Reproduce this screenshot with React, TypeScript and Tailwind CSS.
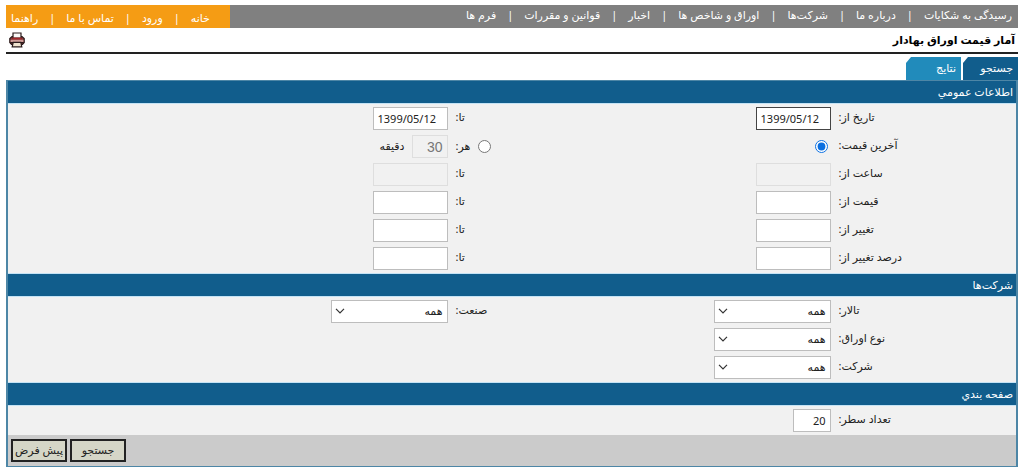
import { Fragment, useState } from "react";
import type { ReactNode } from "react";
import clsx from "clsx";

const MAIN_LINKS = [
  "رسیدگی به شکایات",
  "درباره ما",
  "شرکت‌ها",
  "اوراق و شاخص ها",
  "اخبار",
  "قوانین و مقررات",
  "فرم ها",
];

const USER_LINKS = ["خانه", "ورود", "تماس با ما", "راهنما"];

const RANGES = [
  { id: "price", label: "قیمت از:" },
  { id: "change", label: "تغییر از:" },
  { id: "percent", label: "درصد تغییر از:" },
];

const FIELD = "h-[23px] border px-1";
const ENABLED = "border-[#bdbdbd] bg-white text-[#222]";
const DISABLED = "border-[#dedede] bg-[#f1f1f1] text-[#777]";

function Links({ items }: { items: string[] }) {
  return (
    <>
      {items.map((item, i) => (
        <Fragment key={item}>
          {i > 0 && <span>|</span>}
          <a href="#">{item}</a>
        </Fragment>
      ))}
    </>
  );
}

function PrinterIcon() {
  return (
    <svg viewBox="0 0 16 16" className="h-4 w-4">
      <path d="M3 4.5 H13 L15.2 6.5 V10.5 L13.5 12.5 H2.5 L0.8 10.5 V6.5 Z" fill="#8a3a3c" stroke="#2a1c1c" strokeWidth="1.2" />
      <path d="M4 6.2 V1 H12 V6.2 Z" fill="#fbfaf8" stroke="#2a1c1c" strokeWidth="1.2" />
      <path d="M3.4 6.4 H12.6" stroke="#a3262a" strokeWidth="1.6" />
      <path d="M1.6 7.8 H14.4 V10 H1.6 Z" fill="#cf9c98" />
      <path d="M4.2 10.4 H11.8 L12.8 14.8 H3.2 Z" fill="#efe3cf" stroke="#2a1c1c" strokeWidth="1.2" />
      <path d="M1.4 10.6 H4 M12 10.6 H14.6" stroke="#2a1c1c" strokeWidth="1.4" />
    </svg>
  );
}

function Section({ title, children }: { title: string; children: ReactNode }) {
  return (
    <section className="border-b border-[#c4e3f5] last-of-type:border-b-0">
      <h2 className="h-[22px] bg-[#115d8c] px-[3px] leading-[22px] text-white">{title}</h2>
      <div className="flex flex-col gap-[5px] border-t border-[#c4e3f5] pt-[3px] pb-[3px]">{children}</div>
    </section>
  );
}

function Row({ children }: { children: ReactNode }) {
  return <div className="grid grid-cols-[18%_20%_18%_44%]">{children}</div>;
}

function Label({ htmlFor, children }: { htmlFor: string; children: ReactNode }) {
  return (
    <label htmlFor={htmlFor} className="pe-1 text-end leading-5">
      {children}
    </label>
  );
}

function Cell({ children }: { children: ReactNode }) {
  return <div className="flex items-center gap-[7px] ps-1">{children}</div>;
}

function TextField({
  id,
  value,
  disabled,
  dark,
}: {
  id: string;
  value?: string;
  disabled?: boolean;
  dark?: boolean;
}) {
  return (
    <input
      id={id}
      type="text"
      dir="ltr"
      defaultValue={value}
      disabled={disabled}
      className={clsx(
        FIELD,
        "w-[75px]",
        dark ? "border-[#444] bg-white text-[#222]" : disabled ? DISABLED : ENABLED,
      )}
    />
  );
}

function SelectField({ id }: { id: string }) {
  return (
    <div className="relative">
      <select id={id} className={clsx(FIELD, ENABLED, "w-[117px] appearance-none")}>
        <option>همه</option>
      </select>
      <svg
        viewBox="0 0 10 6"
        className="pointer-events-none absolute top-2 left-1 h-[6px] w-[10px]"
        fill="none"
        stroke="#333"
        strokeWidth="1.2"
      >
        <path d="M1 0.8 L5 4.8 L9 0.8" />
      </svg>
    </div>
  );
}

function Tab({ active, onClick, children }: { active: boolean; onClick: () => void; children: ReactNode }) {
  return (
    <button
      type="button"
      role="tab"
      aria-selected={active}
      onClick={onClick}
      className={clsx(
        "h-[23px] w-[55px] px-[5px] text-start text-white [clip-path:polygon(5px_0,100%_0,100%_100%,0_100%,0_6px)]",
        active ? "bg-[#115d8c]" : "bg-[#218bbb]",
      )}
    >
      {children}
    </button>
  );
}

export default function App() {
  const [tab, setTab] = useState("search");
  const [mode, setMode] = useState("last");

  return (
    <div
      dir="rtl"
      className="bg-white px-[6px] pt-[5px] font-['Noto_Sans','DejaVu_Sans',sans-serif] text-[11px] text-[#222]"
    >
      <nav className="flex h-[23px] justify-between bg-[#808080] text-white">
        <div className="flex gap-[11px] ps-[6px] leading-5">
          <Links items={MAIN_LINKS} />
        </div>
        <div className="flex w-56 justify-end gap-[11px] bg-[#f59c14] pe-[5px] leading-[25px]">
          <Links items={USER_LINKS} />
        </div>
      </nav>

      <header className="flex h-[26px] items-center justify-between border-b-2 border-[#222] px-[3px]">
        <h1 className="font-bold text-black">آمار قیمت اوراق بهادار</h1>
        <button type="button" aria-label="چاپ">
          <PrinterIcon />
        </button>
      </header>

      <div role="tablist" className="mt-[3px] flex gap-[2px]">
        <Tab active={tab === "search"} onClick={() => setTab("search")}>
          جستجو
        </Tab>
        <Tab active={tab === "results"} onClick={() => setTab("results")}>
          نتایج
        </Tab>
      </div>

      <form className="border-2 border-t-1 border-b-1 border-[#4d86a6] bg-[#f1f1f1]" onSubmit={(e) => e.preventDefault()}>
        <Section title="اطلاعات عمومي">
          <Row>
            <Label htmlFor="date-from">تاریخ از:</Label>
            <Cell>
              <TextField id="date-from" value="1399/05/12" dark />
            </Cell>
            <Label htmlFor="date-to">تا:</Label>
            <Cell>
              <TextField id="date-to" value="1399/05/12" />
            </Cell>
          </Row>
          <Row>
            <Label htmlFor="last-price">آخرین قیمت:</Label>
            <Cell>
              <input
                id="last-price"
                type="radio"
                name="mode"
                className="ms-[3px] h-[13px] w-[13px] accent-[#0b6fe0]"
                checked={mode === "last"}
                onChange={() => setMode("last")}
              />
            </Cell>
            <div className="flex items-center justify-end gap-2 pe-1">
              <input
                id="every"
                type="radio"
                name="mode"
                className="h-[13px] w-[13px] accent-[#0b6fe0]"
                checked={mode === "every"}
                onChange={() => setMode("every")}
              />
              <label htmlFor="every">هر:</label>
            </div>
            <Cell>
              <input
                id="minutes"
                type="text"
                defaultValue="30"
                disabled
                className={clsx(FIELD, DISABLED, "w-9 font-['Liberation_Sans',sans-serif] text-sm")}
              />
              <label htmlFor="minutes">دقیقه</label>
            </Cell>
          </Row>
          <Row>
            <Label htmlFor="time-from">ساعت از:</Label>
            <Cell>
              <TextField id="time-from" disabled />
            </Cell>
            <Label htmlFor="time-to">تا:</Label>
            <Cell>
              <TextField id="time-to" disabled />
            </Cell>
          </Row>
          {RANGES.map(({ id, label }) => (
            <Row key={id}>
              <Label htmlFor={`${id}-from`}>{label}</Label>
              <Cell>
                <TextField id={`${id}-from`} />
              </Cell>
              <Label htmlFor={`${id}-to`}>تا:</Label>
              <Cell>
                <TextField id={`${id}-to`} />
              </Cell>
            </Row>
          ))}
        </Section>

        <Section title="شرکت‌ها">
          <Row>
            <Label htmlFor="hall">تالار:</Label>
            <Cell>
              <SelectField id="hall" />
            </Cell>
            <Label htmlFor="industry">صنعت:</Label>
            <Cell>
              <SelectField id="industry" />
            </Cell>
          </Row>
          <Row>
            <Label htmlFor="kind">نوع اوراق:</Label>
            <Cell>
              <SelectField id="kind" />
            </Cell>
          </Row>
          <Row>
            <Label htmlFor="company">شرکت:</Label>
            <Cell>
              <SelectField id="company" />
            </Cell>
          </Row>
        </Section>

        <Section title="صفحه بندي">
          <Row>
            <Label htmlFor="rows">تعداد سطر:</Label>
            <Cell>
              <input id="rows" type="text" defaultValue="20" className={clsx(FIELD, ENABLED, "w-[38px]")} />
            </Cell>
          </Row>
        </Section>

        <footer className="flex items-center justify-end gap-[3px] bg-[#cbcbcb] px-[3px] py-1">
          <button type="submit" className="h-[23px] w-14 border-2 border-[#222] bg-[#d5d6c7]">
            جستجو
          </button>
          <button type="reset" className="h-[23px] w-14 border-2 border-[#222] bg-[#d5d6c7]">
            پیش فرض
          </button>
        </footer>
      </form>
    </div>
  );
}
